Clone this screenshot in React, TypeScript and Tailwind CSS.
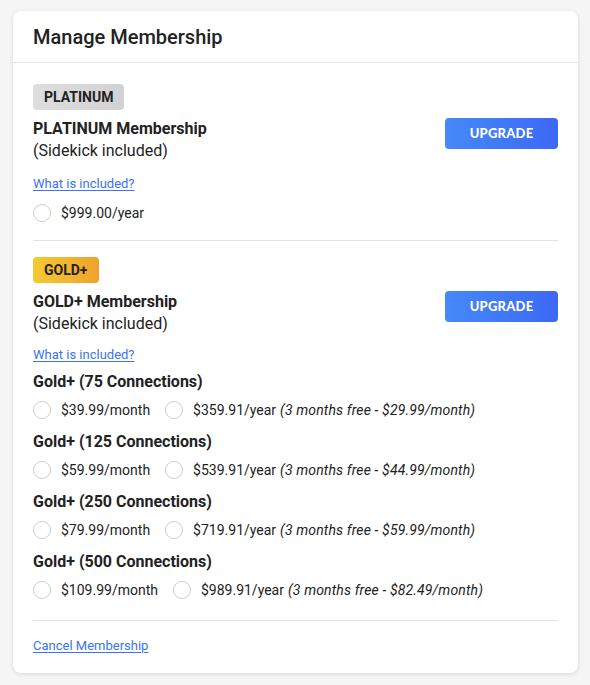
import React from "react";

const Radio = () => (
  <span className="inline-block w-[18px] h-[18px] rounded-full border border-[#cfcfcf] bg-white shrink-0" />
);

const Option = ({ price, note }: { price: string; note?: string }) => (
  <label className="flex items-center gap-[10px]">
    <Radio />
    <span className="text-[14px] text-[#222]">
      {price}
      {note && <i className="ml-1 tracking-[0.15px]">{note}</i>}
    </span>
  </label>
);

const UpgradeButton = () => (
  <button className="w-[113px] h-[31px] rounded-[4px] bg-gradient-to-r from-[#4689f7] to-[#3d68f4] text-white text-[13px] font-black tracking-[0.2px] [font-family:Lato,'Liberation_Sans',sans-serif]">
    UPGRADE
  </button>
);

const Link = ({ children }: { children: React.ReactNode }) => (
  <a href="#" className="text-[13px] leading-[20px] text-[#3b73f0] underline underline-offset-2">
    {children}
  </a>
);

const tiers = [
  { name: "Gold+ (75 Connections)", m: "$39.99/month", y: "$359.91/year", n: "(3 months free - $29.99/month)" },
  { name: "Gold+ (125 Connections)", m: "$59.99/month", y: "$539.91/year", n: "(3 months free - $44.99/month)" },
  { name: "Gold+ (250 Connections)", m: "$79.99/month", y: "$719.91/year", n: "(3 months free - $59.99/month)" },
  { name: "Gold+ (500 Connections)", m: "$109.99/month", y: "$989.91/year", n: "(3 months free - $82.49/month)" },
];

export default function App() {
  return (
    <div className="min-h-[685px] bg-[#f5f5f5] pt-[11px] pl-[13px] [font-family:Roboto,'Liberation_Sans',sans-serif] text-[#222]">
      <div className="w-[565px] h-[662px] bg-white rounded-[8px] shadow-[0_1px_4px_rgba(0,0,0,0.12)]">
        <div className="h-[52px] px-5 flex items-center border-b border-[#e6e6e6]">
          <h1 className="text-[20px] font-medium text-[#222] pt-[1px]">Manage Membership</h1>
        </div>
        <div className="px-5">
          {/* Platinum */}
          <div className="pt-[21px] pb-[16px] border-b border-[#e3e3e3]">
            <span className="inline-flex items-center h-[26px] px-[11px] rounded-[4px] bg-gradient-to-r from-[#dedede] to-[#d2d2d2] text-[14px] font-bold text-[#222]">
              PLATINUM
            </span>
            <div className="mt-[8px] flex justify-between items-start">
              <div>
                <div className="text-[16px] leading-[22px] font-bold">PLATINUM Membership</div>
                <div className="text-[16px] leading-[22px]">(Sidekick included)</div>
              </div>
              <UpgradeButton />
            </div>
            <div className="mt-[9px]">
              <Link>What is included?</Link>
            </div>
            <div className="mt-[7px] h-[22px] flex items-center">
              <Option price="$999.00/year" />
            </div>
          </div>
          {/* Gold+ */}
          <div className="pt-[16px] pb-[19px] border-b border-[#e3e3e3]">
            <span className="inline-flex items-center h-[26px] px-[11px] rounded-[4px] bg-gradient-to-r from-[#f5c932] to-[#f0a22c] text-[14px] font-bold text-[#222]">
              GOLD+
            </span>
            <div className="mt-[8px] flex justify-between items-start">
              <div>
                <div className="text-[16px] leading-[22px] font-bold">GOLD+ Membership</div>
                <div className="text-[16px] leading-[22px]">(Sidekick included)</div>
              </div>
              <UpgradeButton />
            </div>
            <div className="mt-[7px]">
              <Link>What is included?</Link>
            </div>
            <div className="mt-[5px] flex flex-col gap-[10px]">
              {tiers.map((t) => (
                <div key={t.name}>
                  <div className="text-[16px] leading-[22px] font-bold">{t.name}</div>
                  <div className="mt-[6px] h-[22px] flex items-center gap-[15px]">
                    <Option price={t.m} />
                    <Option price={t.y} note={t.n} />
                  </div>
                </div>
              ))}
            </div>
          </div>
          <div className="pt-[12px]">
            <Link>Cancel Membership</Link>
          </div>
        </div>
      </div>
    </div>
  );
}
